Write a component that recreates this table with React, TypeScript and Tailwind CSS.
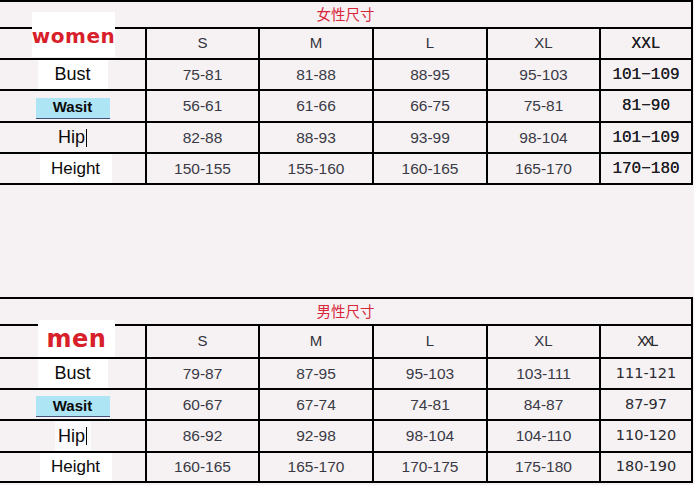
import type { ReactNode } from "react";

type SizeTable = {
  title: string;
  logo: ReactNode;
  logoBox: string;
  headerHeight: string;
  rowHeights: string[];
  rows: string[][];
  xxlFont: string;
  xxlHeaderClass: string;
  hipBox: string;
};

const sizes = ["S", "M", "L", "XL", "XXL"];
const grid = "grid grid-cols-[147px_113px_114px_114px_113px_92px]";
const cell = "flex items-center justify-center border-r-2 border-b-2 border-black";

const women: SizeTable = {
  title: "女性尺寸",
  logo: (
    <span className="mt-[3px] font-['DejaVu_Sans'] text-[20px] font-bold tracking-[0.5px] text-[#d8202a]">women</span>
  ),
  logoBox: "top-[10px] left-[32px] h-[45px] w-[83px]",
  headerHeight: "h-[31px]",
  rowHeights: ["h-[31px]", "h-[32px]", "h-[31px]", "h-[31px]"],
  rows: [
    ["75-81", "81-88", "88-95", "95-103", "101−109"],
    ["56-61", "61-66", "66-75", "75-81", "81−90"],
    ["82-88", "88-93", "93-99", "98-104", "101−109"],
    ["150-155", "155-160", "160-165", "165-170", "170−180"],
  ],
  xxlFont: "font-['Liberation_Mono'] text-[16px] text-[#1e1e24] [text-shadow:0_0_0.3px_#1e1e24]",
  xxlHeaderClass: "font-['Liberation_Mono'] text-[16px] text-[#1e1e24] [text-shadow:0_0_0.3px_#1e1e24]",
  hipBox: "",
};

const men: SizeTable = {
  title: "男性尺寸",
  logo: (
    <span className="font-['DejaVu_Sans'] text-[24px] font-bold leading-none tracking-[0.5px] text-[#d8202a]">men</span>
  ),
  logoBox: "top-[21px] left-[38px] h-[37px] w-[77px]",
  headerHeight: "h-[33px]",
  rowHeights: ["h-[31px]", "h-[31px]", "h-[32px]", "h-[30px]"],
  rows: [
    ["79-87", "87-95", "95-103", "103-111", "111-121"],
    ["60-67", "67-74", "74-81", "84-87", "87-97"],
    ["86-92", "92-98", "98-104", "104-110", "110-120"],
    ["160-165", "165-170", "170-175", "175-180", "180-190"],
  ],
  xxlFont: "font-['DejaVu_Sans'] text-[14.5px] text-[#2a2a30]",
  xxlHeaderClass: "font-['DejaVu_Sans'] text-[14px] tracking-[-3px] text-[#2a2a30]",
  hipBox: "bg-[#fbfbfd]",
};

function Label({ index, hipBox }: { index: number; hipBox: string }) {
  if (index === 0)
    return <span className="flex h-full w-[70px] items-center justify-center bg-white text-[18px]">Bust</span>;
  if (index === 1)
    return (
      <span className="mt-[4px] flex h-[21px] w-[74px] items-center justify-center border-b border-[#44507a] bg-[#aee5f5] text-[15px] font-bold">
        Wasit
      </span>
    );
  if (index === 2)
    return (
      <span className={`flex h-full w-[36px] items-center justify-center text-[18px] ${hipBox}`}>
        Hip<span className="ml-[1px] h-[18px] w-[1px] bg-black" />
      </span>
    );
  return <span className="ml-[6px] flex h-full w-[72px] items-center justify-center bg-white text-[17px]">Height</span>;
}

function Table({ t }: { t: SizeTable }) {
  return (
    <div className="relative w-[693px] border-t-2 border-black">
      <div className={`${cell} h-[27px] pt-[2px] text-[14.5px] text-[#d8263a]`}>{t.title}</div>
      <div className={`${grid} ${t.headerHeight}`}>
        <div className={cell} />
        {sizes.map((s, i) => (
          <div key={s} className={`${cell} ${i === 4 ? t.xxlHeaderClass : "text-[15px] text-[#33333d]"}`}>
            {s}
          </div>
        ))}
      </div>
      {t.rows.map((row, r) => (
        <div key={r} className={`${grid} ${t.rowHeights[r]}`}>
          <div className={`${cell} text-[#0a0a0a]`}>
            <Label index={r} hipBox={t.hipBox} />
          </div>
          {row.map((v, i) => (
            <div key={i} className={`${cell} ${i === 4 ? t.xxlFont : "text-[15.5px] text-[#3a3a46]"}`}>
              {v}
            </div>
          ))}
        </div>
      ))}
      <div className={`absolute flex items-center justify-center bg-white ${t.logoBox}`}>{t.logo}</div>
    </div>
  );
}

export default function App() {
  return (
    <div className="h-[485px] w-[694px] overflow-hidden bg-[#f6f2f3] font-['Liberation_Sans','Noto_Sans_CJK_SC',sans-serif]">
      <Table t={women} />
      <div className="h-[112px]" />
      <Table t={men} />
    </div>
  );
}
